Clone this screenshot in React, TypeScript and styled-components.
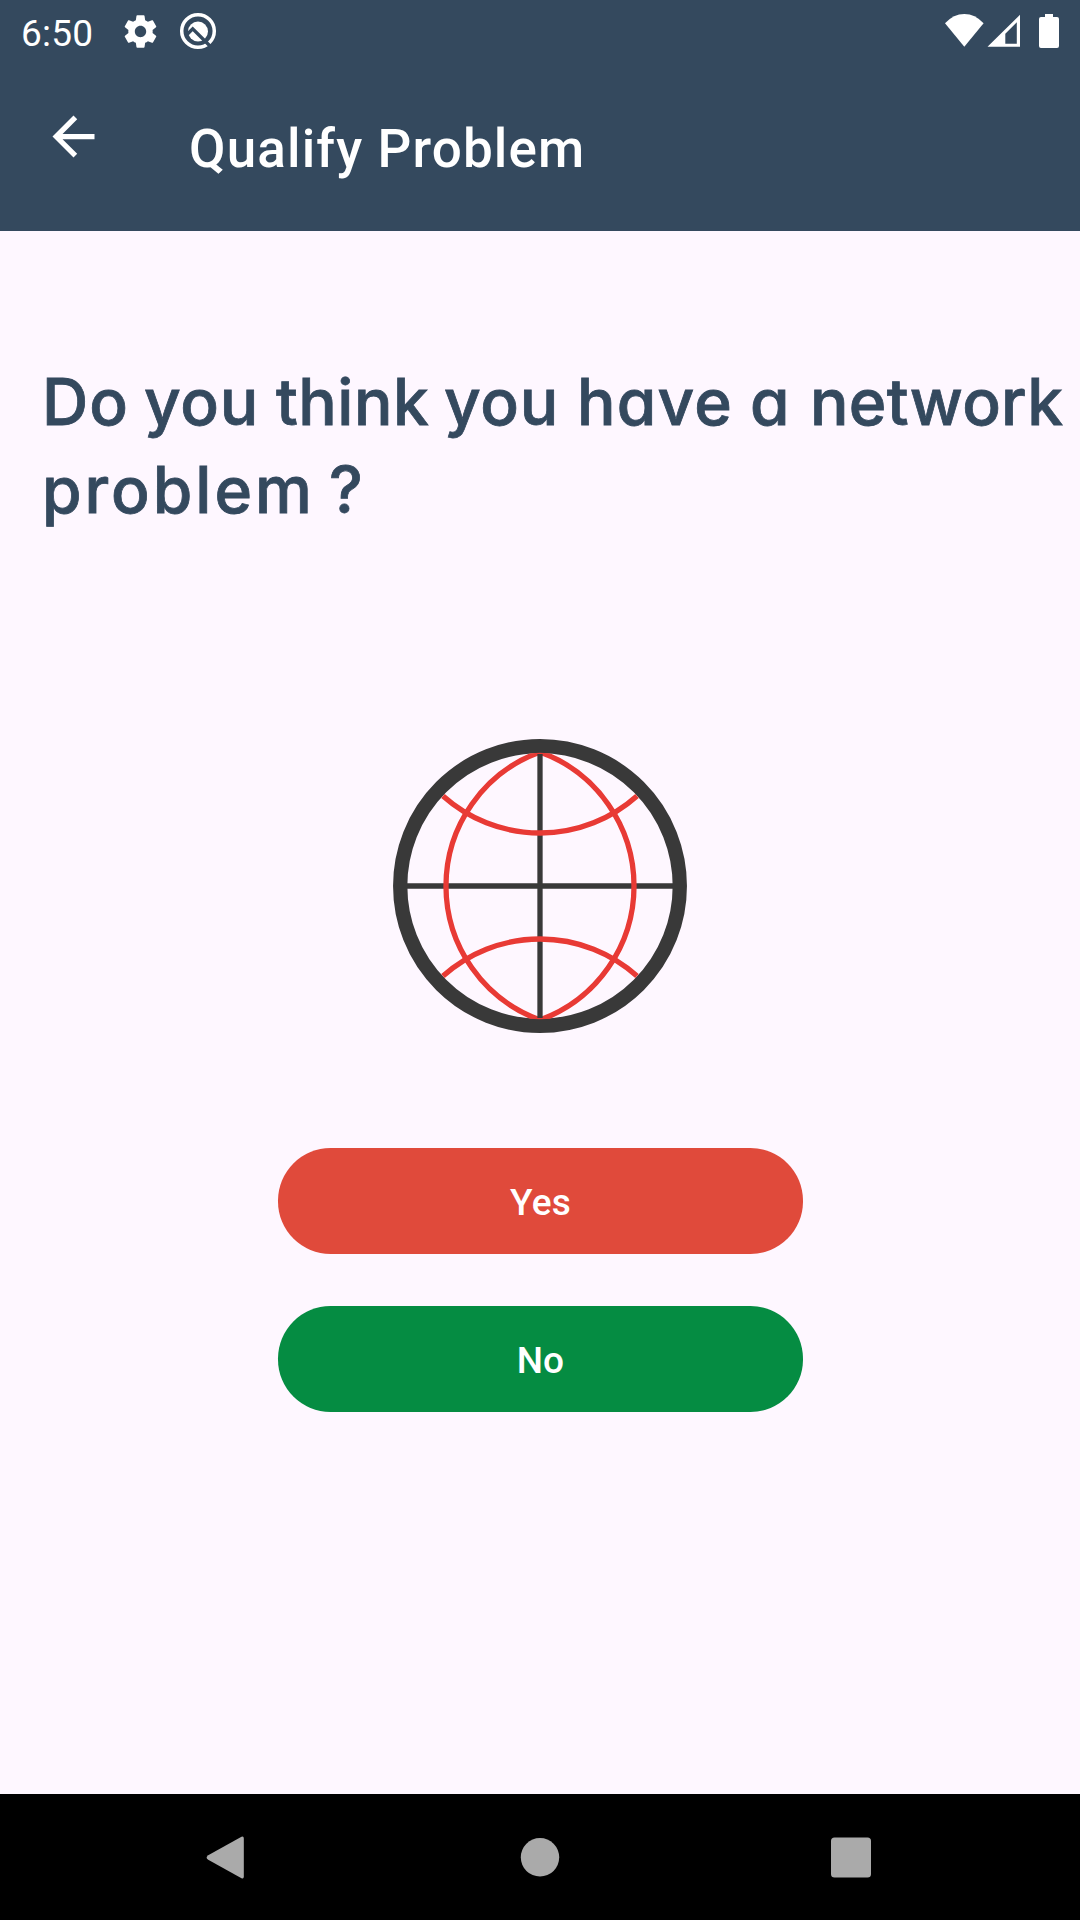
import React from "react";
import styled, { createGlobalStyle } from "styled-components";

const GlobalStyle = createGlobalStyle`
  * { box-sizing: border-box; }
  body { margin: 0; background: #fef7ff; }
`;

const Screen = styled.div`
  display: flex;
  flex-direction: column;
  width: 1080px;
  height: 1920px;
  overflow: hidden;
  background: #fef7ff;
  font-family: Roboto, sans-serif;
`;

const Header = styled.header`
  display: flex;
  flex-direction: column;
  height: 231px;
  background: #34495e;
  color: #fff;
`;

const StatusBar = styled.div`
  display: flex;
  align-items: center;
  justify-content: space-between;
  height: 63px;
  padding: 0 21px 1px;
`;

const StatusGroup = styled.div`
  display: flex;
  align-items: center;
`;

const Clock = styled.span`
  width: 99.5px;
  padding-top: 4px;
  font-size: 37px;
  line-height: 43px;
  letter-spacing: 0.2px;
`;

const Glyph = styled.svg<{ $gap?: number }>`
  display: block;
  flex: none;
  margin-left: ${(p) => p.$gap ?? 0}px;
`;

const Toolbar = styled.div`
  display: flex;
  align-items: flex-start;
  gap: 84px;
  padding: 42px 42px 0;
`;

const BackButton = styled.button`
  display: flex;
  width: 63px;
  height: 63px;
  padding: 0;
  border: 0;
  background: none;
`;

const Title = styled.h1`
  margin: 13px 0 0;
  font-size: 53px;
  line-height: 62px;
  font-weight: 500;
  letter-spacing: 1.14px;
  white-space: nowrap;
`;

const Content = styled.main`
  display: flex;
  flex: 1;
  flex-direction: column;
  align-items: center;
  padding-top: 127px;
`;

const Question = styled.h2`
  align-self: stretch;
  margin: 0;
  padding-left: 42px;
  color: #34495e;
  font-family: Inter, sans-serif;
  font-feature-settings: "cv11" 1;
  font-size: 64px;
  line-height: 88px;
  font-weight: 500;
  -webkit-text-stroke: 0.8px #34495e;
`;

const Line = styled.span`
  display: flex;
`;

const Word = styled.span<{ $width: number; $spacing?: number }>`
  flex: none;
  width: ${(p) => p.$width}px;
  letter-spacing: ${(p) => p.$spacing ?? 0}px;
  white-space: nowrap;
`;

const Globe = styled.svg`
  display: block;
  margin-top: 205px;
`;

const Actions = styled.div`
  display: flex;
  flex-direction: column;
  gap: 52px;
  margin-top: 115px;
`;

const Choice = styled.button<{ $color: string }>`
  width: 525px;
  height: 106px;
  padding: 3px 0 0 1px;
  border: 0;
  border-radius: 52.5px;
  background: ${(p) => p.$color};
  color: #fff;
  font-family: Roboto, sans-serif;
  font-size: 37px;
  font-weight: 500;
  letter-spacing: 0.2px;
`;

const NavBar = styled.nav`
  display: flex;
  align-items: center;
  justify-content: space-between;
  height: 126px;
  padding: 0 193px 0 194px;
  background: #000;
`;

const firstLine = [
  { text: "Do", width: 102, spacing: 1 },
  { text: "you", width: 132, spacing: 0.7 },
  { text: "think", width: 168, spacing: 0.5 },
  { text: "you", width: 133, spacing: 0.7 },
  { text: "have", width: 173, spacing: 1.2 },
  { text: "a", width: 60, spacing: 0 },
  { text: "network", width: 260, spacing: 0.3 },
];
const secondLine = [
  { text: "problem", width: 287, spacing: 3 },
  { text: "?", width: 40, spacing: 0 },
];

export default function App() {
  return (
    <Screen>
      <GlobalStyle />
      <Header>
        <StatusBar>
          <StatusGroup>
            <Clock>6:50</Clock>
            <Glyph width="39" height="39" viewBox="0 0 24 24" fill="#fff">
              <path d="M19.43 12.98c.04-.32.07-.64.07-.98s-.03-.66-.07-.98l2.11-1.65c.19-.15.24-.42.12-.64l-2-3.46c-.12-.22-.39-.3-.61-.22l-2.49 1c-.52-.4-1.08-.73-1.69-.98l-.38-2.65C14.46 2.18 14.25 2 14 2h-4c-.25 0-.46.18-.49.42l-.38 2.65c-.61.25-1.17.59-1.69.98l-2.49-1c-.23-.09-.49 0-.61.22l-2 3.46c-.13.22-.07.49.12.64l2.11 1.65c-.04.32-.07.65-.07.98s.03.66.07.98l-2.11 1.65c-.19.15-.24.42-.12.64l2 3.46c.12.22.39.3.61.22l2.49-1c.52.4 1.08.73 1.69.98l.38 2.65c.03.24.24.42.49.42h4c.25 0 .46-.18.49-.42l.38-2.65c.61-.25 1.17-.59 1.69-.98l2.49 1c.23.09.49 0 .61-.22l2-3.46c.12-.22.07-.49-.12-.64l-2.11-1.65zM12 15.5c-1.93 0-3.5-1.57-3.5-3.5s1.57-3.5 3.5-3.5 3.5 1.57 3.5 3.5-1.57 3.5-3.5 3.5z" />
            </Glyph>
            <Glyph $gap={19.5} width="38" height="38" viewBox="0 0 38 38" fill="none">
              <circle cx="19" cy="19" r="16.3" stroke="#fff" strokeWidth="3.5" />
              <circle cx="19" cy="19.5" r="10" fill="#fff" />
              <path d="M7 23.500l6.700-6.700L31 34" stroke="#34495e" strokeWidth="3.4" />
            </Glyph>
          </StatusGroup>
          <StatusGroup>
            <Glyph width="40" height="34" viewBox="0 0 40 34" fill="#fff">
              <path d="M0 9.300Q8.500 0 19.300 0T38.600 9.300L19.300 32.800z" />
            </Glyph>
            <Glyph $gap={2} width="34" height="34" viewBox="0 0 34 34" fill="#fff">
              <path fillRule="evenodd" d="M33 0.700v32H0.500zM29.800 8.200L18.300 19.700V29.700H29.800z" />
            </Glyph>
            <Glyph $gap={18} width="20" height="34" viewBox="0 0 20 34" fill="#fff">
              <path d="M6 0h8v3h4q2 0 2 2v27q0 2-2 2H2q-2 0-2-2V5q0-2 2-2h4z" />
            </Glyph>
          </StatusGroup>
        </StatusBar>
        <Toolbar>
          <BackButton aria-label="Back">
            <Glyph width="63" height="63" viewBox="0 0 24 24" fill="#fff">
              <path d="M20 11H7.830l5.590-5.590L12 4l-8 8 8 8 1.410-1.410L7.830 13H20v-2z" />
            </Glyph>
          </BackButton>
          <Title>Qualify Problem</Title>
        </Toolbar>
      </Header>
      <Content>
        <Question>
          <Line>
            {firstLine.map((w, i) => (
              <Word key={i} $width={w.width} $spacing={w.spacing}>{w.text}</Word>
            ))}
          </Line>
          <Line>
            {secondLine.map((w, i) => (
              <Word key={i} $width={w.width} $spacing={w.spacing}>{w.text}</Word>
            ))}
          </Line>
        </Question>
        <Globe width="294" height="294" viewBox="-147 -147 294 294" fill="none">
          <clipPath id="globe-face">
            <circle r="133.300" />
          </clipPath>
          <g stroke="#393939" strokeWidth="5.300">
            <path d="M0-128V128M-133 0H133" />
            <circle r="139.800" strokeWidth="14.300" />
          </g>
          <g stroke="#e83a35" strokeWidth="5.300" clipPath="url(#globe-face)">
            <path d="M0-134A142.500 142.500 0 0 0 0 134M0-134A142.500 142.500 0 0 1 0 134" />
            <path d="M-97-90A145.600 145.600 0 0 0 97-90M-97 90A145.600 145.600 0 0 1 97 90" />
          </g>
          <path d="M0-132V-128M0 132V128" stroke="#393939" strokeWidth="5.300" />
        </Globe>
        <Actions>
          <Choice $color="#e04a3b">Yes</Choice>
          <Choice $color="#058c42">No</Choice>
        </Actions>
      </Content>
      <NavBar>
        <Glyph width="63" height="63" viewBox="0 0 63 63" fill="#aaa">
          <path d="M47.500 10.800Q49.800 9.800 49.800 12.500V50.500Q49.800 53.200 47.500 52.200L14.200 33.800Q11 31.500 14.200 29.200z" />
        </Glyph>
        <Glyph width="63" height="63" viewBox="0 0 63 63" fill="#aaa">
          <circle cx="31" cy="31.300" r="19.200" />
        </Glyph>
        <Glyph width="63" height="63" viewBox="0 0 63 63" fill="#aaa">
          <rect x="7" y="11.500" width="40" height="40" rx="3.500" />
        </Glyph>
      </NavBar>
    </Screen>
  );
}
